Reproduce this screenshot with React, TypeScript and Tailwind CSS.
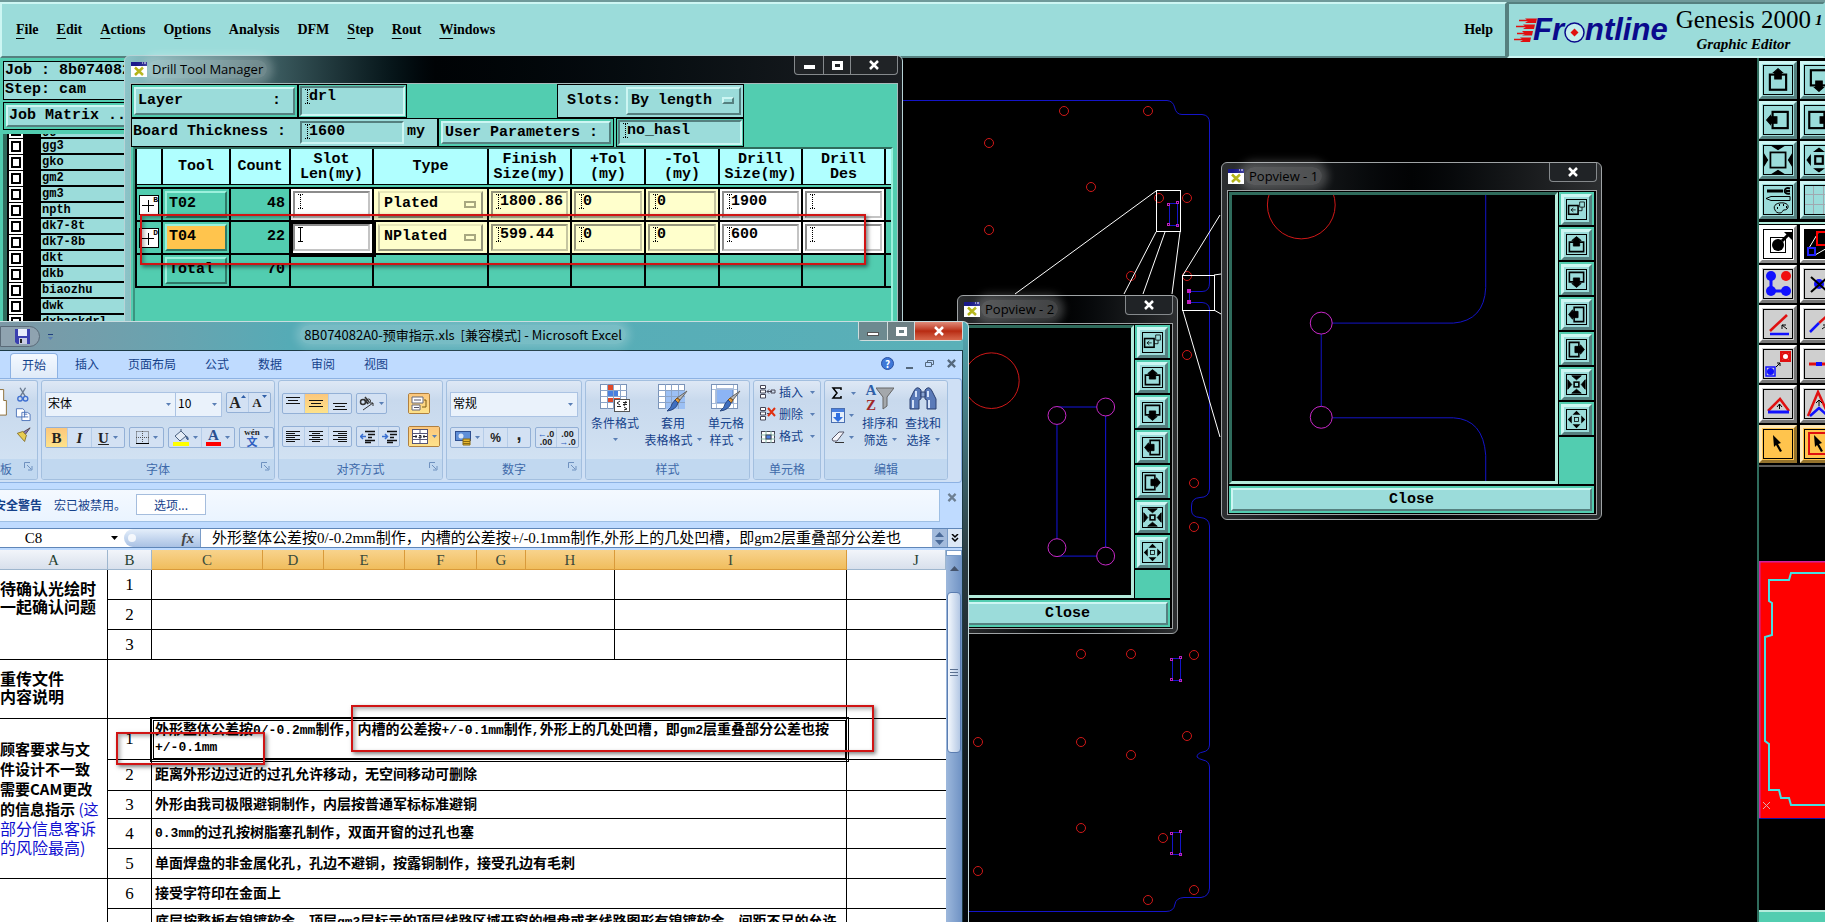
import React from "react";
import clsx from "clsx";

const RAISED =
  "border-2 border-t-[#cdf6f3] border-l-[#cdf6f3] border-b-[#55807f] border-r-[#55807f] bg-[#9bdcda]";
const SUNKEN =
  "border-2 border-t-[#55807f] border-l-[#55807f] border-b-[#cdf6f3] border-r-[#cdf6f3] bg-[#9bdcda]";
const MONO = "font-['Liberation_Mono',monospace]";
const SERIF = "font-['Liberation_Serif','Noto_Sans_CJK_SC',serif]";
const CJK = "font-['Noto_Sans_CJK_SC',sans-serif]";

/* ---------- main menu ---------- */

const MENUS: [string, string, string][] = [
  ["", "F", "ile"],
  ["", "E", "dit"],
  ["", "A", "ctions"],
  ["O", "p", "tions"],
  ["Analysis", "", ""],
  ["DFM", "", ""],
  ["", "S", "tep"],
  ["", "R", "out"],
  ["", "W", "indows"],
];

function FrontlineLogo() {
  return (
    <div className="flex items-center">
      <svg width="24" height="26" viewBox="0 0 24 26" className="-mr-1">
        <path d="M6 3.500h12M3 9.500h12M4 16.500h10M1 22.500h12" stroke="#e01010" strokeWidth="1.500" />
        <path
          d="M12 1.500H24L23 6H12L15 4ZM10 7.500H22L21 12H10L13 10ZM9 14H20L19 18.500H9L12 17ZM7 20.500H18L17 25H7L10 23Z"
          fill="#e01010"
        />
      </svg>
      <div className="flex items-center font-['Liberation_Sans',sans-serif] text-[31px] font-bold italic leading-8 text-[#0a0a8c]">
        <span>Fr</span>
        <svg width="21" height="21" viewBox="0 0 21 21" className="mt-1">
          <circle cx="10.500" cy="10.500" r="9.500" fill="#c4eeec" stroke="#0a0a8c" strokeWidth="1.500" />
          <path d="M10.500 6.500L14.500 10.500L10.500 14.500L6.500 10.500Z" fill="#e01010" />
        </svg>
        <span>ntline</span>
      </div>
    </div>
  );
}

function MenuBar() {
  return (
    <header className="relative flex h-[58px] shrink-0 border-t-2 border-[#6f9a9a] bg-[#9bdcda]">
      <nav
        className={clsx(
          "flex flex-1 items-center gap-[18px] border-2 border-t-[#cdf6f3] border-l-[#cdf6f3] border-b-[#55807f] border-r-[#55807f] pb-[1px] pl-[14px] pr-3 text-sm font-bold text-black",
          SERIF
        )}
      >
        {MENUS.map(([pre, key, post]) => (
          <button key={pre + key + post} type="button">
            {pre}
            <span className="underline underline-offset-4">{key}</span>
            {post}
          </button>
        ))}
        <button type="button" className="ml-auto">
          Help
        </button>
      </nav>
      <div className="flex w-[318px] items-center overflow-hidden border-2 border-t-[#55807f] border-l-[#55807f] border-b-[#cdf6f3] border-r-transparent pl-1 whitespace-nowrap">
        <FrontlineLogo />
        <div className={clsx("ml-2 text-center text-black", SERIF)}>
          <div className="text-[25px] leading-7">Genesis 2000</div>
          <div className="text-[15px] font-bold italic leading-5">Graphic Editor</div>
        </div>
        <span className={clsx("mb-5 ml-1 text-[15px] font-bold italic", SERIF)}>1</span>
      </div>
    </header>
  );
}

/* ---------- layer list ---------- */

const LAYERS = ["gg2", "gg3", "gko", "gm2", "gm3", "npth", "dk7-8t", "dk7-8b", "dkt", "dkb", "biaozhu", "dwk", "dxbackdrl"];

function LayerSidebar() {
  return (
    <aside className={clsx("relative flex w-[160px] shrink-0 flex-col bg-[#52cdb0] pl-[3px] text-black", MONO)}>
      <div className="mt-[3px] border border-black bg-[#9bdcda] pl-[1px] text-[15px] font-bold leading-[18px]">
        Job : 8b074082a0
      </div>
      <div className="border border-t-0 border-black bg-[#9bdcda] pl-[1px] text-[15px] font-bold leading-[18px]">
        Step: cam
      </div>
      <div className="mt-[2px] border border-black p-[2px]">
        <button type="button" className={clsx("block w-full pl-[1px] text-left text-[15px] font-bold leading-[18px]", RAISED)}>
          Job Matrix ...
        </button>
      </div>
      <ul className="mt-1 flex-1 overflow-hidden border-l-4 border-[#2f6b5c] bg-black">
        {LAYERS.map((name, i) => (
          <li key={name} className={clsx("flex h-4", i === 0 && "-mt-[11px]")}>
            <label className="flex flex-1">
              <span className="ml-[2px] flex h-[15px] w-[14px] items-center justify-center bg-white">
                <input type="checkbox" className="h-[11px] w-[10px] appearance-none border-2 border-black bg-white" />
              </span>
              <span className="ml-[18px] flex-1 border-b-2 border-black bg-[#9bdcda] pl-[1px] text-xs font-bold leading-[14px]">
                {name}
              </span>
            </label>
          </li>
        ))}
      </ul>
    </aside>
  );
}

/* ---------- board drawing ---------- */

const HOLES: [number, number][] = [
  [1064, 111], [1148, 111], [989, 143], [1091, 187], [989, 230], [1159, 198], [1187, 198],
  [1131, 276], [1187, 276], [1187, 355], [1194, 483], [1194, 527], [1081, 654], [1131, 654],
  [1194, 655], [978, 742], [1081, 742], [1187, 736], [1131, 755], [978, 871], [1081, 828],
  [1163, 838], [1148, 900], [1194, 890],
];

function SlotMark({ x, y }: { x: number; y: number }) {
  return (
    <g transform={`translate(${x} ${y})`} fill="none">
      <path d="M1.500 .500H9.500V22.500H1.500Z" stroke="#1414c8" />
      <g stroke="#c020c0">
        <rect x="-.5" y=".5" width="2" height="2" />
        <rect x="8.500" y="-1.500" width="2" height="2" />
        <rect x="-.5" y="20.500" width="2" height="2" />
        <rect x="8.500" y="21.500" width="2" height="2" />
      </g>
    </g>
  );
}

function BoardDrawing() {
  return (
    <svg className="absolute inset-0 h-full w-full bg-black" fill="none">
      <path
        d="M890 100.500H1167Q1173 101 1174.500 107Q1176 114.500 1182 114.500H1202Q1209.500 115 1209.500 123V283Q1209.500 291.500 1202 291.500H1189.500V302.500H1202Q1209.500 303 1209.500 310V489Q1209 497.500 1200 497.500Q1191.500 498 1191.500 506V510Q1191.500 517 1200 517.500Q1209 518 1209.500 526V745Q1209 751 1203 752Q1197 753 1197 757Q1199 759 1203 760Q1209 761 1209.500 767V888Q1209 896.500 1201 897.500H1184Q1176 898 1175 904Q1174 911.500 1166 911.500H960"
        stroke="#1414c8"
      />
      {HOLES.map(([cx, cy]) => (
        <circle key={`${cx}-${cy}`} cx={cx} cy={cy} r="4.500" stroke="#d01818" />
      ))}
      <SlotMark x={1168} y={203} />
      <SlotMark x={1171} y={658} />
      <SlotMark x={1171} y={832} />
      <g fill="#c020c0">
        <rect x="1187" y="289" width="4" height="4" />
        <rect x="1187" y="300" width="4" height="4" />
      </g>
      <g stroke="#fff">
        <rect x="1156.500" y="190.500" width="24" height="41" />
        <rect x="1182.500" y="275.500" width="32" height="35" />
        <path d="M1156 191L1015 294M1156 232L1124 294M1165 232L1143 294M1180 232L1172 294" />
        <path d="M1183 275L1220 215M1214 275L1221 274M1214 310L1221 314M1183 311L1220 437" />
      </g>
    </svg>
  );
}

/* ---------- window chrome ---------- */

function XAppIcon() {
  return (
    <svg width="16" height="15" viewBox="0 0 16 15" className="shrink-0">
      <rect width="16" height="15" fill="#fff" />
      <rect width="16" height="4" fill="#1a1a8a" />
      <path d="M11 1h1M13 1h2" stroke="#fff" />
      <path d="M4 5.500L12 13M12 5.500L4 13" stroke="#b3b312" strokeWidth="2.500" />
    </svg>
  );
}

function CloseGlyph({ className = "text-white" }: { className?: string }) {
  return (
    <svg width="12" height="10" viewBox="0 0 12 10" className={className}>
      <path d="M2 1L10 9M10 1L2 9" stroke="currentColor" strokeWidth="2.500" />
    </svg>
  );
}

function WindowTitle({ title, withSizers }: { title: string; withSizers?: boolean }) {
  return (
    <div className="flex h-[27px] shrink-0 items-start">
      <div className="flex items-center gap-px pl-[1px] pt-1">
        <XAppIcon />
        <span className="rounded-full bg-white/25 px-1 font-['Open_Sans','Noto_Sans',sans-serif] text-[13px] leading-[18px] text-black shadow-[0_0_8px_6px_rgba(255,255,255,0.22)]">
          {title}
        </span>
      </div>
      <div className="ml-auto flex h-[19px] rounded-b border border-t-0 border-[#85898c] bg-[#202326]">
        {withSizers && (
          <>
            <button type="button" aria-label="Minimize" className="flex w-[29px] items-center justify-center border-r border-[#85898c]">
              <span className="mt-1 h-1 w-[11px] bg-white" />
            </button>
            <button type="button" aria-label="Maximize" className="flex w-[27px] items-center justify-center border-r border-[#85898c]">
              <span className="h-[9px] w-[11px] border-[3px] border-white" />
            </button>
          </>
        )}
        <button type="button" aria-label="Close window" className="flex w-[46px] items-center justify-center">
          <CloseGlyph />
        </button>
      </div>
    </div>
  );
}

/* ---------- drill tool manager ---------- */

function IBeam({ solid }: { solid?: boolean }) {
  return (
    <svg width="5" height="15" viewBox="0 0 5 15" className="shrink-0">
      <path
        d="M0 .500H5M2.500 1V14M0 14.500H5"
        stroke="#000"
        strokeDasharray={solid ? undefined : "1 1"}
      />
    </svg>
  );
}

function EntryBox({ label, value, className }: { label: string; value: string; className?: string }) {
  return (
    <div className={clsx("flex items-start pl-[3px] pt-[1px]", SUNKEN, className)}>
      <IBeam />
      <input aria-label={label} defaultValue={value} className="-ml-px w-full min-w-0 bg-transparent text-[15px] font-bold leading-4 outline-none" />
    </div>
  );
}

type Tool = {
  flag: string;
  name: string;
  count: number;
  active?: boolean;
  type: string;
  finish: string;
  drill: string;
};

const TOOLS: Tool[] = [
  { flag: "B", name: "T02", count: 48, type: "Plated", finish: "1800.86", drill: "1900" },
  { flag: "D", name: "T04", count: 22, active: true, type: "NPlated", finish: "599.44", drill: "600" },
];

const HEADS = ["", "Tool", "Count", "Slot\nLen(my)", "Type", "Finish\nSize(my)", "+Tol\n(my)", "-Tol\n(my)", "Drill\nSize(my)", "Drill\nDes", ""];

function CellInput({ label, value, yellow, focused }: { label: string; value?: string; yellow?: boolean; focused?: boolean }) {
  return (
    <td
      className={clsx(
        "border-b-2 border-r-2 border-black p-0",
        yellow ? "bg-[#ffffcc]" : "bg-white",
        focused && "relative z-10 outline-4 -outline-offset-2 outline-black"
      )}
    >
      <div
        className={clsx(
          "m-[2px] flex h-[27px] items-start border-2 pl-[3px] pt-[1px]",
          yellow
            ? "border-t-[#96967c] border-l-[#96967c] border-b-[#c5c5a0] border-r-[#c5c5a0]"
            : "border-t-[#8c8c8c] border-l-[#8c8c8c] border-b-[#c4c4c4] border-r-[#c4c4c4]"
        )}
      >
        <IBeam solid={focused} />
        <input aria-label={label} defaultValue={value} className="-ml-px w-full min-w-0 bg-transparent font-bold leading-4 outline-none" />
      </div>
    </td>
  );
}

function ToolRow({ tool }: { tool: Tool }) {
  return (
    <tr className="h-[33px]">
      <td className="border-b-2 border-r-2 border-black p-0">
        <div className="relative ml-[2px] h-5 w-5 border border-black bg-white">
          <svg width="18" height="18" viewBox="0 0 18 18">
            <path d="M2 9.500H14M8.500 4V16" stroke="#000" />
          </svg>
          <span className="absolute -top-[1px] right-0 text-[8px] font-bold leading-[9px]">{tool.flag}</span>
        </div>
      </td>
      <td className="border-b-2 border-r-2 border-black p-0">
        <button
          type="button"
          className={clsx(
            "mx-[2px] block h-[27px] w-[62px] border-2 border-t-[#9bf0dc] border-l-[#9bf0dc] border-b-[#2f7a68] border-r-[#2f7a68] pl-[2px] text-left",
            tool.active && "bg-[#ffc44d]"
          )}
        >
          {tool.name}
        </button>
      </td>
      <td className="border-b-2 border-r-2 border-black p-0 pr-1 text-right">{tool.count}</td>
      <CellInput label="Slot length" focused={tool.active} />
      <td className="border-b-2 border-r-2 border-black bg-[#ffffcc] p-0">
        <div className="relative mx-1 h-[27px] border-2 border-t-[#e8e8b8] border-l-[#c5c5a0] border-b-[#96967c] border-r-[#96967c]">
          <select aria-label="Type" className="h-full w-full appearance-none pl-1 font-bold">
            <option>{tool.type}</option>
          </select>
          <span className="pointer-events-none absolute right-[5px] top-2 h-[7px] w-3 border-2 border-[#a8a880]" />
        </div>
      </td>
      <CellInput label="Finish size" value={tool.finish} yellow />
      <CellInput label="Plus tolerance" value="0" yellow />
      <CellInput label="Minus tolerance" value="0" yellow />
      <CellInput label="Drill size" value={tool.drill} />
      <CellInput label="Drill designator" />
      <td className="border-b-2 border-black" />
    </tr>
  );
}

function DrillToolManager() {
  return (
    <section className="absolute left-[124px] top-[55px] flex h-[300px] w-[779px] flex-col rounded-t-md border border-[#b7d3d6] bg-linear-to-r from-[#8cc4c8] via-[#000305] via-40% to-[#1b1e22] pl-[5px] pr-1">
      <WindowTitle title="Drill Tool Manager" withSizers />
      <div className={clsx("flex-1 border border-[#a8bcbc] bg-[#52cdb0] text-[15px] font-bold text-black", MONO)}>
        <div className="flex h-[34px]">
          <div className="w-[167px] border border-black p-[2px]">
            <button type="button" className={clsx("flex h-full w-full items-center justify-between pl-[2px] pr-3", RAISED)}>
              <span>Layer</span>
              <span>:</span>
            </button>
          </div>
          <div className="w-[109px] border border-black p-[1px]">
            <EntryBox label="Layer" value="drl" className="h-full" />
          </div>
          <label className="ml-[150px] flex w-[187px] items-center justify-between border border-black bg-[#9bdcda] pl-[9px] pr-[2px]">
            Slots:
            <span className={clsx("relative h-[28px] w-[115px]", RAISED)}>
              <select className="h-full w-full appearance-none pl-[3px] font-bold">
                <option>By length</option>
              </select>
              <span className="pointer-events-none absolute right-[5px] top-2 h-[7px] w-3 border-2 border-t-[#cdf6f3] border-l-[#cdf6f3] border-b-[#55807f] border-r-[#55807f]" />
            </span>
          </label>
        </div>
        <div className="flex h-[29px]">
          <label className="flex w-[307px] items-center border border-black bg-[#9bdcda] pl-[1px]">
            <span className="w-[167px]">Board Thickness :</span>
            <EntryBox label="Board thickness" value="1600" className="h-[23px] w-[104px]" />
            <span className="ml-[3px]">my</span>
          </label>
          <div className="w-[176px] border border-black p-[2px]">
            <button type="button" className={clsx("block h-full w-full pl-[2px] text-left leading-5", RAISED)}>
              User Parameters :
            </button>
          </div>
          <div className="ml-[2px] w-[128px] border border-black p-[1px]">
            <EntryBox label="User parameters" value="no_hasl" className="h-full" />
          </div>
        </div>
        <div className="ml-[2px] mr-1 h-[174px] overflow-hidden border-2 border-b-0 border-l-[#3b9480] border-r-[#9bf0dc] border-t-[#2f6b5c]">
          <table className="w-[758px] table-fixed border-separate border-spacing-0 border-l-2 border-black">
            <colgroup>
              <col className="w-[26px]" />
              <col className="w-[68px]" />
              <col className="w-[60px]" />
              <col className="w-[83px]" />
              <col className="w-[115px]" />
              <col className="w-[83px]" />
              <col className="w-[74px]" />
              <col className="w-[74px]" />
              <col className="w-[83px]" />
              <col className="w-[83px]" />
              <col className="w-[9px]" />
            </colgroup>
            <thead>
              <tr className="h-9">
                {HEADS.map((head, i) => (
                  <th key={i} className="border-b border-r-2 border-black bg-[#b0ffff] p-0 leading-[15px] whitespace-pre">
                    {head}
                  </th>
                ))}
              </tr>
              <tr className="h-1">
                <td colSpan={11} className="border-b-2 border-black p-0" />
              </tr>
            </thead>
            <tbody>
              {TOOLS.map((tool) => (
                <ToolRow key={tool.name} tool={tool} />
              ))}
              <tr className="h-[33px]">
                <td className="border-b-2 border-r-2 border-black" />
                <td className="border-b-2 border-r-2 border-black p-0">
                  <button
                    type="button"
                    className="mx-[2px] block h-[27px] w-[62px] border-2 border-t-[#9bf0dc] border-l-[#9bf0dc] border-b-[#2f7a68] border-r-[#2f7a68] pl-[2px] text-left"
                  >
                    Total
                  </button>
                </td>
                <td className="border-b-2 border-r-2 border-black p-0 pr-1 text-right">70</td>
                {[0, 1, 2, 3, 4, 5, 6].map((n) => (
                  <td key={n} className="border-b-2 border-r-2 border-black" />
                ))}
                <td className="border-b-2 border-black" />
              </tr>
            </tbody>
          </table>
        </div>
      </div>
    </section>
  );
}

/* ---------- popview windows ---------- */

type ViewIcon = "swap" | "up" | "down" | "left" | "right" | "in" | "out" | "big" | "small";

const INWARD = "M6 1H18L12 6ZM6 23H18L12 18ZM1 6V18L6 12ZM23 6V18L18 12Z";
const OUTWARD = "M7 6H17L12 1ZM7 18H17L12 23ZM6 7V17L1 12ZM18 7V17L23 12Z";
const TURNS: Record<string, number> = { up: 0, right: 90, down: 180, left: 270 };

function ViewGlyph({ icon, size, slim }: { icon: ViewIcon; size: number; slim?: boolean }) {
  return (
    <svg width={size} height={size} viewBox="0 0 24 24" fill="none" stroke="#000">
      {icon in TURNS && (
        <g transform={`rotate(${TURNS[icon]} 12 12)`}>
          {slim ? (
            <>
              <rect x="4.500" y="7" width="15" height="14" strokeWidth="2" />
              <path d="M12 1.500L16 5H15V11H9V5H8Z" fill="#000" />
            </>
          ) : (
            <>
              <path d="M9 9H3V21H21V9H15" strokeWidth="2" />
              <path d="M12 2L18 7H16V14H8V7H6Z" fill="#000" />
            </>
          )}
        </g>
      )}
      {icon === "swap" && (
        <>
          <rect x="2" y="7" width="12" height="11" strokeWidth="2" />
          <path d="M11 12.500H5M8 10L5 12.500L8 15M14 13.500H19V9" />
          <path d="M16 2.500H22V9H16Z" />
        </>
      )}
      {icon === "in" && (
        <>
          <rect x="9" y="9" width="6" height="6" strokeWidth="2" />
          <path d={INWARD} fill="#000" />
        </>
      )}
      {icon === "out" && (
        <>
          <rect x="9.500" y="9.500" width="5" height="5" />
          <path d={OUTWARD} fill="#000" strokeWidth="0" />
        </>
      )}
      {icon === "big" && (
        <>
          <rect x="5.500" y="5.500" width="13" height="13" strokeWidth="1.500" />
          <path d="M8 .500H16L12 3ZM8 23.500H16L12 21ZM.500 8V16L3 12ZM23.500 8V16L21 12Z" fill="#000" />
        </>
      )}
      {icon === "small" && (
        <>
          <rect x="8.500" y="8.500" width="7" height="7" strokeWidth="2" />
          <path d="M8 4H16L12 1ZM8 20H16L12 23ZM4 8V16L1 12ZM20 8V16L23 12Z" fill="#000" />
        </>
      )}
    </svg>
  );
}

const VIEW_ICONS: ViewIcon[] = ["swap", "up", "down", "left", "right", "in", "out"];

function Popview({ title, className, children }: { title: string; className: string; children: React.ReactNode }) {
  return (
    <section
      className={clsx(
        "absolute flex flex-col rounded-md border border-[#9fa3a5] bg-linear-to-r from-[#2c2e30] via-[#020304] to-[#2c2e30] pb-[5px] pl-[5px] pr-1",
        className
      )}
    >
      <WindowTitle title={title} />
      <div className="flex flex-1 flex-col border border-[#9fa3a5] bg-black p-[1px]">
        <div className="flex flex-1">
          <div className="flex-1 overflow-hidden border-[3px] border-b-[#b4ecdc] border-l-[#2f6b5c] border-r-[#b4ecdc] border-t-[#2f6b5c]">
            {children}
          </div>
          <div className="ml-[1px] mr-[1px] flex w-[35px] flex-col bg-[#52cdb0]">
            {VIEW_ICONS.map((icon) => (
              <div key={icon} className="h-[35px] border-b-2 border-black p-[2px]">
                <button
                  type="button"
                  aria-label={`View ${icon}`}
                  className="flex h-[31px] w-[31px] items-center justify-center border-[3px] border-t-[#cdf6f3] border-l-[#cdf6f3] border-b-[#55807f] border-r-[#55807f] bg-[#9bdcda]"
                >
                  <span className="border border-black">
                    <ViewGlyph icon={icon} size={19} />
                  </span>
                </button>
              </div>
            ))}
          </div>
        </div>
        <div className="mr-[1px] mt-[2px] bg-[#52cdb0] p-[2px]">
          <button type="button" className={clsx("block h-[23px] w-full text-[15px] font-bold leading-[19px]", RAISED, MONO)}>
            Close
          </button>
        </div>
      </div>
    </section>
  );
}

function PopviewTwo() {
  return (
    <Popview title="Popview - 2" className="left-[957px] top-[295px] h-[339px] w-[221px]">
      <svg viewBox="967 326 164 269" preserveAspectRatio="xMaxYMin meet" width="100%" fill="none">
        <circle cx="990.500" cy="379" r="28" stroke="#d01818" />
        <path d="M1056.500 405.500H1105.500V555.500H1056.500Z" stroke="#1414e0" />
        <g stroke="#c828c8" fill="#000">
          <circle cx="1056.500" cy="414" r="9" />
          <circle cx="1105.500" cy="405.500" r="9" />
          <circle cx="1056.500" cy="547" r="9" />
          <circle cx="1105.500" cy="555.500" r="9" />
        </g>
      </svg>
    </Popview>
  );
}

function PopviewOne() {
  return (
    <Popview title="Popview - 1" className="left-[1221px] top-[162px] h-[358px] w-[381px]">
      <svg viewBox="1231 194 324 287" width="100%" fill="none">
        <circle cx="1300.500" cy="204" r="34" stroke="#d01818" />
        <path d="M1485.500 190V287Q1484 320 1453 322.500H1320.500V417.500H1453Q1483 419 1485.500 455V490" stroke="#1414c8" />
        <circle cx="1320.500" cy="322.500" r="11" stroke="#c828c8" fill="#000" />
        <circle cx="1320.500" cy="417" r="11" stroke="#c828c8" fill="#000" />
      </svg>
    </Popview>
  );
}

/* ---------- right tool strip ---------- */

function StripButton({ tone, label, children }: { tone: "aqua" | "white" | "gray" | "gold"; label: string; children: React.ReactNode }) {
  return (
    <button
      type="button"
      aria-label={label}
      className={clsx(
        "flex h-[38px] w-[38px] items-center justify-center border-[3px]",
        tone === "aqua" && "border-t-[#cdf6f3] border-l-[#cdf6f3] border-b-[#55807f] border-r-[#55807f] bg-[#9bdcda]",
        tone === "white" && "border-t-white border-l-white border-b-[#8a8a8a] border-r-[#8a8a8a] bg-white",
        tone === "gray" && "border-t-white border-l-white border-b-[#777] border-r-[#777] bg-[#cfcfcf]",
        tone === "gold" && "border-t-[#ffe9b8] border-l-[#ffe9b8] border-b-[#94722c] border-r-[#94722c] bg-[#ffc44d]"
      )}
    >
      <span className="flex h-[30px] w-[30px] items-center justify-center border border-black">{children}</span>
    </button>
  );
}

function Glyph({ children }: { children: React.ReactNode }) {
  return (
    <svg width="28" height="28" viewBox="0 0 28 28" fill="none">
      {children}
    </svg>
  );
}

const CURSOR = "M9 5L17 13L14 14L18 21L16 22L12 15L10 17Z";

function RightStrip() {
  return (
    <aside className="flex w-[68px] shrink-0 flex-col overflow-hidden border-l-2 border-[#2f6b5c] bg-black">
      <div className="grid w-[80px] grid-cols-2 gap-[2px] border-b-2 border-[#b4ecdc] pb-[3px] pt-[3px]">
        <StripButton tone="aqua" label="Pan up"><ViewGlyph icon="up" size={26} slim /></StripButton>
        <StripButton tone="aqua" label="Pan down"><ViewGlyph icon="down" size={26} slim /></StripButton>
        <StripButton tone="aqua" label="Pan left"><ViewGlyph icon="left" size={26} slim /></StripButton>
        <StripButton tone="aqua" label="Pan right"><ViewGlyph icon="right" size={26} slim /></StripButton>
        <StripButton tone="aqua" label="Zoom in"><ViewGlyph icon="big" size={28} /></StripButton>
        <StripButton tone="aqua" label="Zoom out"><ViewGlyph icon="small" size={26} /></StripButton>
        <StripButton tone="aqua" label="Setup">
          <Glyph>
            <path d="M3 5H19" stroke="#000" strokeWidth="3" />
            <path d="M26 2.500C20 0 18 9 26 7.500M26 5H22" stroke="#000" strokeWidth="2" />
            <path d="M2 12.500L7 10.500H26V14.500H7Z" stroke="#000" />
            <path d="M11 24C8 19 14 16 20 17C26 18 25 24 20 24C18 24 19 27 16 27C13 27 12 26 11 24Z" stroke="#000" />
            <path d="M13 22h1M15 19h1M19 19h1M22 21h1" stroke="#000" strokeWidth="2" />
          </Glyph>
        </StripButton>
        <StripButton tone="aqua" label="Grid">
          <Glyph><path d="M0 8.500H28M0 18.500H28M8.500 0V28M18.500 0V28" stroke="#a0a8b0" /></Glyph>
        </StripButton>
      </div>
      <div className="grid w-[80px] grid-cols-2 gap-[2px] border-b-2 border-[#5a5a5a] pb-[2px] pt-[1px]">
        <StripButton tone="white" label="Feature">
          <Glyph>
            <rect x="6.500" y="7.500" width="15" height="15" stroke="#000" />
            <circle cx="14" cy="15" r="6" fill="#000" />
            <path d="M18 11L24 5" stroke="#000" strokeWidth="3" />
            <path d="M20 2H28V10Z" fill="#000" />
          </Glyph>
        </StripButton>
        <StripButton tone="white" label="Copy feature">
          <Glyph>
            <rect width="28" height="28" fill="#000" />
            <path d="M4 18L13 3M10 25L24 17" stroke="#fff" />
            <rect x="12" y="2" width="13" height="13" stroke="#f00" strokeWidth="2" />
            <rect x="3" y="18" width="7" height="7" stroke="#22f" strokeWidth="2" />
          </Glyph>
        </StripButton>
        <StripButton tone="gray" label="Net points">
          <Glyph>
            <path d="M7 6V21H22" stroke="#11f" strokeWidth="3" />
            <circle cx="7" cy="6" r="5" fill="#11f" />
            <circle cx="7" cy="21" r="5" fill="#11f" />
            <circle cx="22" cy="21" r="5" fill="#11f" />
            <circle cx="22" cy="6" r="5" fill="#f01010" />
          </Glyph>
        </StripButton>
        <StripButton tone="gray" label="Delete">
          <Glyph>
            <circle cx="14" cy="14" r="5" fill="#11f" />
            <path d="M6 7L23 22M23 7L6 22" stroke="#000" strokeWidth="2" />
          </Glyph>
        </StripButton>
        <StripButton tone="gray" label="Angle">
          <Glyph>
            <path d="M6 21L23 5" stroke="#e01010" strokeWidth="2.500" />
            <path d="M6 24H25" stroke="#11f" strokeWidth="2.500" />
            <path d="M23 19L18 15M18 19V15H22" stroke="#000" />
          </Glyph>
        </StripButton>
        <StripButton tone="gray" label="Extend">
          <Glyph>
            <path d="M14 13L24 4" stroke="#e01010" strokeWidth="2.500" />
            <path d="M5 22L14 13" stroke="#11f" strokeWidth="2.500" />
            <path d="M17 19L21 16M18 15H22V19" stroke="#000" />
          </Glyph>
        </StripButton>
        <StripButton tone="gray" label="Move pad">
          <Glyph>
            <rect x="17" y="2" width="9" height="9" stroke="#e01010" strokeWidth="2" fill="#fff" />
            <circle cx="21.500" cy="6.500" r="3.500" stroke="#e01010" strokeWidth="2" />
            <rect x="2" y="17" width="9" height="9" stroke="#11f" strokeWidth="1.500" />
            <circle cx="6.500" cy="21.500" r="3.500" fill="#11f" />
            <path d="M12 17L16 13M13 13H16V16" stroke="#000" />
          </Glyph>
        </StripButton>
        <StripButton tone="gray" label="Break">
          <Glyph>
            <path d="M4 14H26" stroke="#e01010" strokeWidth="3" />
            <path d="M11 14H17" stroke="#11f" strokeWidth="4" />
          </Glyph>
        </StripButton>
        <StripButton tone="gray" label="Triangle">
          <Glyph>
            <path d="M4 21L16 9L25 21" stroke="#e01010" strokeWidth="2.500" />
            <path d="M4 22H25" stroke="#11f" strokeWidth="3" />
            <path d="M15.500 19V14M13 17L15.500 14L18 17" stroke="#000" />
          </Glyph>
        </StripButton>
        <StripButton tone="gray" label="Offset">
          <Glyph>
            <path d="M3 26L13 2L24 26" stroke="#e01010" strokeWidth="2.500" />
            <path d="M5 26L14 18L23 26" stroke="#11f" strokeWidth="2.500" />
            <path d="M14 16V10M11 13L14 10L17 13" stroke="#000" />
          </Glyph>
        </StripButton>
        <StripButton tone="gold" label="Select">
          <Glyph><path d={CURSOR} fill="#000" /></Glyph>
        </StripButton>
        <StripButton tone="gold" label="Select area">
          <Glyph>
            <rect x="4" y="3" width="21" height="21" stroke="#e01010" strokeWidth="2" />
            <path d={CURSOR} fill="#000" />
          </Glyph>
        </StripButton>
      </div>
      <svg width="80" height="258" viewBox="0 0 80 258" className="mt-[94px] shrink-0" fill="none">
        <rect width="80" height="258" fill="#f00" />
        <path d="M.500 257V.500H80" stroke="#d020a0" strokeWidth="2" />
        <path d="M0 257.500H80" stroke="#1414a0" />
        <path
          d="M80 12H32L30 19H10V40L13 42V74L6 76V180L10 183V229H20L22 237H30L32 244H80"
          stroke="#46e0e0"
          strokeWidth="2"
        />
        <path d="M4 241L11 248M11 241L4 248" stroke="#d8b0b0" />
      </svg>
      <div className="mt-auto h-3 w-full shrink-0 border-t-2 border-[#b4ecdc] bg-[#52cdb0]" />
    </aside>
  );
}

/* ---------- excel ---------- */

function Caret() {
  return (
    <svg width="5" height="3" viewBox="0 0 5 3" className="shrink-0">
      <path d="M0 0H5L2.500 3Z" fill="#5a7fb5" />
    </svg>
  );
}

function RibbonGroup({ label, launcher, className, children }: { label: string; launcher?: boolean; className: string; children?: React.ReactNode }) {
  return (
    <div
      className={clsx(
        "relative flex h-[100px] shrink-0 flex-col overflow-hidden rounded-[3px] border border-[#a3bfdf] bg-linear-to-b from-[#dee8f5] via-[#c8d9ed] via-20% to-[#d4e4f4]",
        className
      )}
    >
      <div className="flex-1">{children}</div>
      <div className="flex h-5 items-center justify-center bg-[#c1d8f0] text-xs leading-5 text-[#3e6aaa]">
        {label}
        {launcher && (
          <svg width="9" height="9" viewBox="0 0 9 9" fill="none" stroke="#6f91bf" className="absolute bottom-2 right-1">
            <path d="M.500 6V.500H6M3 3L7 7M8 4V8H4" />
          </svg>
        )}
      </div>
    </div>
  );
}

function RibbonSet({ children, className }: { children: React.ReactNode; className?: string }) {
  return (
    <div className={clsx("flex h-[21px] items-stretch divide-x divide-[#b5cce8] rounded-[2px] border border-[#93b0d6] bg-[#d3e1f3]", className)}>
      {children}
    </div>
  );
}

function RB({ label, on, caret, className, children }: { label: string; on?: boolean; caret?: boolean; className: string; children: React.ReactNode }) {
  return (
    <button
      type="button"
      aria-label={label}
      className={clsx("flex items-center justify-center gap-1 text-[#222]", on && "bg-linear-to-b from-[#fcc77c] to-[#fde28a]", className)}
    >
      {children}
      {caret && <Caret />}
    </button>
  );
}

function Combo({ label, value, className }: { label: string; value: string; className: string }) {
  return (
    <span className={clsx("relative h-[25px] border border-[#abc3e3] bg-[#eaf2fb]", className)}>
      <select aria-label={label} className="block h-5 w-full appearance-none pl-[2px] text-xs text-black">
        <option>{value}</option>
      </select>
      <span className="pointer-events-none absolute right-1 top-[10px]">
        <Caret />
      </span>
    </span>
  );
}

function Lines({ rows }: { rows: [number, number, number][] }) {
  return (
    <svg width="15" height="15" viewBox="0 0 15 15">
      {rows.map(([x, y, w]) => (
        <path key={y} d={`M${x} ${y + 0.5}h${w}`} stroke="#111" />
      ))}
    </svg>
  );
}

const LEFT: [number, number, number][] = [[0, 2, 14], [0, 4, 9], [0, 6, 14], [0, 8, 9], [0, 10, 14], [0, 12, 9]];
const CENTER: [number, number, number][] = [[0, 2, 14], [3, 4, 8], [0, 6, 14], [3, 8, 8], [0, 10, 14], [3, 12, 8]];
const RIGHT: [number, number, number][] = [[0, 2, 14], [5, 4, 9], [0, 6, 14], [5, 8, 9], [0, 10, 14], [5, 12, 9]];

function IndentIcon({ flip }: { flip?: boolean }) {
  return (
    <svg width="15" height="14" viewBox="0 0 15 14" fill="none">
      <path d="M5 1.500H15M8 4.500H15M8 7.500H12M5 10.500H15M5 12.500H11" stroke="#111" strokeWidth="1.500" />
      <path d={flip ? "M0 6.500H5M3 4L5.500 6.500L3 9" : "M6 6.500H1M3 4L.500 6.500L3 9"} stroke="#3a6fd0" strokeWidth="1.500" />
    </svg>
  );
}

function SizeMark({ down }: { down?: boolean }) {
  return (
    <svg width="5" height="3" viewBox="0 0 5 3" className="-ml-1 mb-3">
      <path d={down ? "M0 0H5L2.500 3Z" : "M0 3H5L2.500 0Z"} fill="#2f5fa8" />
    </svg>
  );
}

function FontGroup() {
  return (
    <RibbonGroup label="字体" launcher className="w-[234px]">
      <div className="flex pl-[3px] pt-[11px]">
        <Combo label="字体名称" value="宋体" className="w-[131px]" />
        <Combo label="字号" value="10" className="-ml-[1px] w-[47px]" />
        <RibbonSet className={clsx("ml-1 font-bold", SERIF)}>
          <RB label="增大字号" className="w-[22px]"><span className="text-base">A</span><SizeMark /></RB>
          <RB label="减小字号" className="w-[21px]"><span className="text-[13px]">A</span><SizeMark down /></RB>
        </RibbonSet>
      </div>
      <div className={clsx("flex gap-1 pl-[3px] pt-[10px] text-[15px] font-bold leading-5", SERIF)}>
        <RibbonSet>
          <RB label="加粗" on className="w-[22px]">B</RB>
          <RB label="倾斜" className="w-[24px]"><i>I</i></RB>
          <RB label="下划线" caret className="w-[32px]"><u>U</u></RB>
        </RibbonSet>
        <RibbonSet>
          <RB label="边框" caret className="w-[33px]">
            <svg width="13" height="13" viewBox="0 0 13 13" stroke="#555" strokeDasharray="1 1" fill="none">
              <path d="M.500 .500H12.500V12M.500 .500V12M6.500 0V12M0 6.500H13" />
              <path d="M0 12.500H13" stroke="#000" strokeDasharray="none" />
            </svg>
          </RB>
        </RibbonSet>
        <RibbonSet>
          <RB label="填充颜色" caret className="w-[33px]">
            <svg width="16" height="17" viewBox="0 0 16 17">
              <path d="M2 7L8 2L13 7L7 12Z" fill="#e4ecf6" stroke="#4a6080" />
              <path d="M8 2V0M13 7Q16 8 15 11Q13 10 13 7" fill="#3a6fd0" stroke="#4a6080" />
              <rect y="13" width="16" height="4" fill="#ff0" />
            </svg>
          </RB>
          <RB label="字体颜色" caret className="w-[32px]">
            <span className="border-b-4 border-[#f00] px-[2px] leading-[13px] text-[#2a4f8f]">A</span>
          </RB>
        </RibbonSet>
        <RibbonSet>
          <RB label="拼音" caret className="w-[33px]">
            <span className="text-center text-[9px] leading-[8px]">
              wén
              <span className={clsx("block text-[11px] leading-[11px] text-[#2f5fc0]", CJK)}>文</span>
            </span>
          </RB>
        </RibbonSet>
      </div>
    </RibbonGroup>
  );
}

function AlignGroup() {
  return (
    <RibbonGroup label="对齐方式" launcher className="w-[165px]">
      <div className="flex pl-[3px] pt-[12px]">
        <RibbonSet>
          <RB label="顶端对齐" className="w-[22px]"><Lines rows={[[0, 1, 14], [2, 4, 10], [0, 7, 14]]} /></RB>
          <RB label="垂直居中" on className="w-[24px]"><Lines rows={[[0, 4, 14], [2, 7, 10], [0, 10, 14]]} /></RB>
          <RB label="底端对齐" className="w-[22px]"><Lines rows={[[0, 7, 14], [2, 10, 10], [0, 13, 14]]} /></RB>
        </RibbonSet>
        <RibbonSet className="ml-1">
          <RB label="方向" caret className="w-[29px]">
            <svg width="16" height="16" viewBox="0 0 16 16" fill="none" stroke="#333">
              <circle cx="4" cy="6" r="2.500" strokeWidth="1.500" />
              <path d="M5 3L9 8M6 1L10 6" strokeWidth="1.500" />
              <circle cx="9.500" cy="5" r="2" />
              <path d="M4 14L14 7M11 7H14V10" />
            </svg>
          </RB>
        </RibbonSet>
        <RibbonSet className="ml-[21px] border-[#b08040]">
          <RB label="自动换行" on className="w-5">
            <svg width="16" height="15" viewBox="0 0 16 15" fill="none">
              <path d="M1 1H12V7H1ZM1 9H9V14H1Z" fill="#fff" stroke="#667" />
              <path d="M3 4H10M3 11.500H8" stroke="#556" />
              <path d="M13 4H15V11H11" stroke="#7a5a10" />
            </svg>
          </RB>
        </RibbonSet>
      </div>
      <div className="flex pl-[3px] pt-[12px]">
        <RibbonSet>
          <RB label="左对齐" className="w-[22px]"><Lines rows={LEFT} /></RB>
          <RB label="居中" className="w-[24px]"><Lines rows={CENTER} /></RB>
          <RB label="右对齐" className="w-[22px]"><Lines rows={RIGHT} /></RB>
        </RibbonSet>
        <RibbonSet className="ml-1">
          <RB label="减少缩进" className="w-[22px]"><IndentIcon /></RB>
          <RB label="增加缩进" className="w-[20px]"><IndentIcon flip /></RB>
        </RibbonSet>
        <RibbonSet className="ml-2 border-[#b08040]">
          <RB label="合并后居中" on caret className="w-[30px]">
            <svg width="16" height="15" viewBox="0 0 16 15" fill="none">
              <rect x=".5" y=".5" width="15" height="14" fill="#fff" stroke="#557" />
              <path d="M0 4.500H16M0 10.500H16M8 0V4M8 11V15" stroke="#557" />
              <path d="M1 7.500H5M15 7.500H11M4 6V9M12 6V9M7 6.500H9V9H7V8H9" stroke="#223" />
            </svg>
          </RB>
        </RibbonSet>
      </div>
    </RibbonGroup>
  );
}

function NumberGroup() {
  return (
    <RibbonGroup label="数字" launcher className="w-[136px]">
      <div className="flex pl-[3px] pt-[11px]">
        <Combo label="数字格式" value="常规" className="w-[128px]" />
      </div>
      <div className="flex gap-1 pl-[3px] pt-[10px] font-['Liberation_Sans',sans-serif] text-xs">
        <RibbonSet>
          <RB label="会计数字格式" caret className="w-[33px]">
            <svg width="16" height="16" viewBox="0 0 16 16">
              <rect x=".5" y="1.500" width="15" height="9" fill="#5f8fd8" stroke="#2f4f90" />
              <circle cx="6" cy="6" r="2.500" fill="#d8e6fa" />
              <path d="M8 9H15V15H8Z" fill="#e8b830" stroke="#8a6a10" />
              <path d="M8 11.500H15M8 13.500H15" stroke="#8a6a10" />
            </svg>
          </RB>
          <RB label="百分比" className="w-[24px]"><span className="font-bold">%</span></RB>
          <RB label="千位分隔" className="w-[22px]"><span className="mb-2 text-[18px] font-bold leading-3">,</span></RB>
        </RibbonSet>
        <RibbonSet>
          <RB label="增加小数位" className="w-[21px]"><span className="text-[9px] font-bold leading-2"><span className="text-[#2f5fc0]">←</span>.0<br />.00</span></RB>
          <RB label="减少小数位" className="w-[21px]"><span className="text-[9px] font-bold leading-2">.00<br /><span className="text-[#2f5fc0]">→</span>.0</span></RB>
        </RibbonSet>
      </div>
    </RibbonGroup>
  );
}

function TableIcon({ kind }: { kind: "cond" | "table" | "cell" }) {
  return (
    <svg width="30" height="29" viewBox="0 0 30 29" fill="none">
      <rect x=".5" y=".5" width="26" height="24" fill="#fff" stroke="#7a93b8" />
      {kind === "cond" && <path d="M7 1H13V7H7ZM7 14H20V19H7Z" fill="#e04a2a" />}
      {kind === "cond" && <path d="M7 7H18V13H7Z" fill="#4a80e0" />}
      {kind === "table" && <path d="M7 7H27V25H7Z" fill="#9cc0f4" />}
      {kind === "cell" && <path d="M5 5H22V19H5Z" fill="#8cb4f4" stroke="#5a80c0" />}
      {kind !== "cell" && <path d="M.500 6.500H27M.500 12.500H27M.500 18.500H27M7.500 0V25M13.500 0V25M20.500 0V25" stroke="#8ba4c8" />}
      {kind === "cell" && <path d="M1 5.500H26M1 19.500H26M5.500 1V24M22.500 1V24" stroke="#a8bcd8" />}
      {kind === "cond" ? (
        <>
          <rect x="14.500" y="15.500" width="15" height="12" fill="#fff" stroke="#555" />
          <path d="M20 17L17 19L20 21M17 22.500H21M23 18.500H27M23 20.500H27M26 17L24 22M24 23L27 25L24 26" stroke="#222" />
        </>
      ) : (
        <>
          <path d="M29 7L22 16L19 14Z" fill="#b8b8b8" stroke="#666" />
          <path d="M22 16L19 14L17 16L20 19Z" fill="#e09a40" stroke="#805010" />
          <path d="M17 16L20 19Q18 26 9 27Q14 23 14 20Z" fill="#3f6fc0" stroke="#2a4880" />
        </>
      )}
    </svg>
  );
}

function BigButton({ icon, lines, className }: { icon: React.ReactNode; lines: [string, string]; className: string }) {
  return (
    <button type="button" className={clsx("flex flex-col items-center text-xs leading-[17px] whitespace-nowrap text-[#15428b]", className)}>
      <span className="flex h-8 items-center">{icon}</span>
      <span>{lines[0]}</span>
      <span className="flex h-[17px] items-center gap-1">
        {lines[1]}
        <Caret />
      </span>
    </button>
  );
}

function CellRow({ label, kind }: { label: string; kind: "insert" | "remove" | "format" }) {
  return (
    <button type="button" className="flex h-[22px] items-center gap-[3px] text-xs text-[#15428b]">
      <svg width="16" height="14" viewBox="0 0 16 14" fill="none" stroke="#445">
        {kind === "format" ? (
          <>
            <rect x="1.500" y="2.500" width="13" height="11" fill="#fff" />
            <path d="M1 6H15M1 10H15M6 2V14M11 2V14" stroke="#8ba" />
            <rect x="6" y="6" width="5" height="4" fill="#4a80e0" />
          </>
        ) : (
          <>
            <path d="M.500 .500H5.500V3.500H.500ZM.500 9.500H5.500V13H.500ZM.500 5H5.500V8H.500Z" fill="#fff" />
            <path d={kind === "insert" ? "M12 6.500H7M9 4.500L7 6.500L9 8.500M11 5H15V8H11Z" : "M7 6.500H10"} />
            {kind === "remove" && <path d="M8 1L15 9M15 1L8 9" stroke="#e03010" strokeWidth="2" />}
          </>
        )}
      </svg>
      {label}
      <span className="ml-1"><Caret /></span>
    </button>
  );
}

function EditGroup() {
  return (
    <RibbonGroup label="编辑" className="w-[124px]">
      <div className="flex pl-[6px] pt-[1px]">
        <div className="flex w-[26px] flex-col">
          <button type="button" aria-label="求和" className="flex h-[22px] items-center gap-2">
            <svg width="12" height="12" viewBox="0 0 12 12" fill="none"><path d="M10 3V1H2L6 6L2 11H10V9" stroke="#000" strokeWidth="1.500" /></svg>
            <Caret />
          </button>
          <button type="button" aria-label="填充" className="flex h-[22px] items-center gap-1">
            <svg width="14" height="15" viewBox="0 0 14 15"><rect x=".5" y=".5" width="13" height="14" fill="#e4eefb" stroke="#4a6fb0" /><path d="M1 1H13V4H1Z" fill="#4a80e0" /><path d="M5 5H9V9H12L7 14L2 9H5Z" fill="#2f6fe0" /></svg>
            <Caret />
          </button>
          <button type="button" aria-label="清除" className="flex h-[22px] items-center gap-1">
            <svg width="14" height="12" viewBox="0 0 14 12"><path d="M1 8L8 1H13L6 10H2Z" fill="#f4f4fa" stroke="#556" /><path d="M4 11.500H13" stroke="#333" /></svg>
            <Caret />
          </button>
        </div>
        <BigButton
          className="w-[46px]"
          lines={["排序和", "筛选"]}
          icon={
            <span className={clsx("flex items-center", SERIF)}>
              <span className="text-[15px] font-bold leading-[15px]">
                <span className="block text-[#2f5fa8]">A</span>
                <span className="block text-[#a02828]">Z</span>
              </span>
              <svg width="18" height="24" viewBox="0 0 18 24"><path d="M0 2H18L11 11V20L7 23V11Z" fill="#a4a8ac" stroke="#666" /></svg>
            </span>
          }
        />
        <BigButton
          className="w-[40px]"
          lines={["查找和", "选择"]}
          icon={
            <svg width="28" height="26" viewBox="0 0 28 26" fill="#5a7ab8" stroke="#2c4070">
              <path d="M5 6Q8 0 12 5V14L10 15V24H1V14ZM23 6Q20 0 16 5V14L18 15V24H27V14Z" />
              <path d="M12 7H16V12H12Z" fill="#8aa4d0" />
              <path d="M4 15V23M20 15V23M7 6V12M19 6V12" stroke="#d4e2f8" strokeWidth="2" />
            </svg>
          }
        />
      </div>
    </RibbonGroup>
  );
}

function Ribbon() {
  return (
    <div className="flex h-[105px] gap-[3px] rounded-r border border-l-0 border-[#8db2e3] bg-[#cfe0f5] pt-[1px]">
      <RibbonGroup label="" className="w-[38px] rounded-l-none border-l-0">
        <div className="flex justify-end pr-[6px] pt-[2px]">
          <svg width="34" height="66" viewBox="0 0 34 66" fill="none">
            <path d="M0 4H4V16H7V32H0" fill="#fff" stroke="#8a6a30" />
            <path d="M22 2L28 12M28 2L22 12" stroke="#6a7a90" strokeWidth="1.500" />
            <circle cx="22" cy="14" r="2.500" stroke="#3f6fd0" strokeWidth="1.500" />
            <circle cx="28" cy="14" r="2.500" stroke="#3f6fd0" strokeWidth="1.500" />
            <path d="M18 25H25L27 27V34H18ZM24 29H30L33 31V38H24Z" fill="#fff" stroke="#4a70b8" />
            <path d="M26 31H30M26 34H31" stroke="#4a70b8" />
            <path d="M33 46L28 53L25 51Z" fill="#8a7ac0" stroke="#544" />
            <path d="M19 52L25 50L29 54L27 61Z" fill="#e8cc50" stroke="#86702a" />
          </svg>
        </div>
        <span className="absolute bottom-0 left-0 text-xs leading-5 text-[#3e6aaa]">板</span>
        <svg width="9" height="9" viewBox="0 0 9 9" fill="none" stroke="#6f91bf" className="absolute bottom-2 right-1">
          <path d="M.500 6V.500H6M3 3L7 7M8 4V8H4" />
        </svg>
      </RibbonGroup>
      <FontGroup />
      <AlignGroup />
      <NumberGroup />
      <RibbonGroup label="样式" className="w-[165px]">
        <div className="flex pl-[2px] pt-[1px]">
          <BigButton className="w-[54px]" icon={<TableIcon kind="cond" />} lines={["条件格式", ""]} />
          <BigButton className="w-[62px]" icon={<TableIcon kind="table" />} lines={["套用", "表格格式"]} />
          <BigButton className="w-[44px]" icon={<TableIcon kind="cell" />} lines={["单元格", "样式"]} />
        </div>
      </RibbonGroup>
      <RibbonGroup label="单元格" className="w-[68px]">
        <div className="pl-[6px]">
          <CellRow kind="insert" label="插入" />
          <CellRow kind="remove" label="删除" />
          <CellRow kind="format" label="格式" />
        </div>
      </RibbonGroup>
      <EditGroup />
    </div>
  );
}

const COLUMNS = ["A", "B", "C", "D", "E", "F", "G", "H", "I", "J"];

const NOTES: [number, string, string][] = [
  [2, "距离外形边过近的过孔允许移动，无空间移动可删除", "h-[31px]"],
  [3, "外形由我司极限避铜制作，内层按普通军标标准避铜", "h-[28px]"],
  [4, "0.3mm的过孔按树脂塞孔制作，双面开窗的过孔也塞", "h-[30px]"],
  [5, "单面焊盘的非金属化孔，孔边不避铜，按露铜制作，接受孔边有毛刺", "h-[30px]"],
];

const CELL = "border-b border-r border-black p-0";
const EDGE = "border-b border-black p-0";
const NUM = "border-b border-r border-black p-0 text-center text-[17px] font-normal";

// Latin runs are set in a half-width face between the Chinese text
function Mixed({ text }: { text: string }) {
  return (
    <>
      {text.split(/([\x20-\x7e]+)/).map((part, i) =>
        i % 2 === 1 ? (
          <span key={i} className={clsx("text-[13px]", MONO)}>
            {part}
          </span>
        ) : (
          part
        )
      )}
    </>
  );
}

function Sheet() {
  return (
    <table className={clsx("w-[946px] table-fixed border-separate border-spacing-0 bg-white text-sm leading-4 font-bold text-black", SERIF)}>
      <colgroup>
        <col className="w-[108px]" />
        <col className="w-[44px]" />
        <col className="w-[111px]" />
        <col className="w-[61px]" />
        <col className="w-[81px]" />
        <col className="w-[72px]" />
        <col className="w-[49px]" />
        <col className="w-[89px]" />
        <col className="w-[232px]" />
        <col />
      </colgroup>
      <thead>
        <tr className="h-5">
          {COLUMNS.map((c, i) => (
            <th
              key={c}
              className={clsx(
                "border-b border-r p-0 text-[15px] leading-[18px] font-normal",
                i > 1 && i < 9
                  ? "border-[#d99a3a] bg-linear-to-b from-[#f8d38c] to-[#f0bd5c] text-[#3a4a3a]"
                  : "border-[#9eb6ce] bg-linear-to-b from-[#f2f5fa] to-[#d8e0ec] text-[#274030]",
                c === "J" && "pl-10"
              )}
            >
              {c}
            </th>
          ))}
        </tr>
      </thead>
      <tbody>
        <tr className="h-[30px]">
          <td rowSpan={3} className={clsx(CELL, "pt-[11px] align-top text-base leading-[18px] whitespace-nowrap")}>
            待确认光绘时
            <br />
            一起确认问题
          </td>
          <td className={NUM}>1</td>
          <td colSpan={6} className={CELL} />
          <td className={CELL} />
          <td className={EDGE} />
        </tr>
        {[2, 3].map((n) => (
          <tr key={n} className="h-[30px]">
            <td className={NUM}>{n}</td>
            <td colSpan={6} className={CELL} />
            <td className={CELL} />
            <td className={EDGE} />
          </tr>
        ))}
        <tr className="h-[59px]">
          <td className={clsx(CELL, "text-base leading-[18px]")}>
            重传文件
            <br />
            内容说明
          </td>
          <td colSpan={8} className={CELL} />
          <td className={EDGE} />
        </tr>
        <tr className="h-[41px]">
          <td rowSpan={5} className={clsx(CELL, "pt-5 align-top text-[15px] leading-5 whitespace-nowrap", CJK)}>
            顾客要求与文
            <br />
            件设计不一致
            <br />
            需要CAM更改
            <br />
            的信息指示<span className="font-normal text-[#1010d0]"> (这</span>
            <span className="block text-base font-normal leading-[19px] text-[#1010d0]">
              部分信息客诉
              <br />
              的风险最高)
            </span>
          </td>
          <td className={NUM}>1</td>
          <td colSpan={7} className={clsx(CELL, "pl-[3px] whitespace-nowrap outline-4 -outline-offset-2 outline-double outline-black")}>
            <Mixed text="外形整体公差按0/-0.2mm制作，内槽的公差按+/-0.1mm制作,外形上的几处凹槽，即gm2层重叠部分公差也按" />
            <br />
            <Mixed text="+/-0.1mm" />
          </td>
          <td className={EDGE} />
        </tr>
        {NOTES.map(([n, text, height]) => (
          <tr key={n} className={height}>
            <td className={NUM}>{n}</td>
            <td colSpan={7} className={clsx(CELL, "pl-[3px]")}>
              <Mixed text={text} />
            </td>
            <td className={EDGE} />
          </tr>
        ))}
        <tr className="h-[30px]">
          <td rowSpan={2} className={CELL} />
          <td className={NUM}>6</td>
          <td colSpan={7} className={clsx(CELL, "pl-[3px]")}>接受字符印在金面上</td>
          <td className={EDGE} />
        </tr>
        <tr className="h-[41px]">
          <td className={NUM} />
          <td colSpan={7} className={clsx(CELL, "pl-[3px] pt-[5px] align-top whitespace-nowrap")}>
            <Mixed text="底层按整板有镍镀软金，顶层gm3层标示的顶层线路区域开窗的焊盘或者线路图形有镍镀软金，间距不足的允许" />
          </td>
          <td className={EDGE} />
        </tr>
      </tbody>
    </table>
  );
}

function ExcelWindow() {
  return (
    <section
      className={clsx(
        "absolute bottom-0 left-0 top-[321px] flex w-[969px] flex-col overflow-hidden rounded-tr-md border-r border-t border-[#c9dde0] bg-linear-to-b from-[#55aab4] via-[#2a3a40] via-40% to-[#04080c] pr-[5px]",
        CJK
      )}
    >
      <div className="relative flex h-7 shrink-0 bg-linear-to-r from-[#7d98a6] via-[#55abb6] via-30% to-[#5ab0b8]">
        <div className="mt-1 flex h-[21px] w-10 items-center rounded-r-full border border-[#5a6a78] bg-[#8fa3b0] pl-[14px]">
          <svg width="15" height="15" viewBox="0 0 15 15">
            <path d="M0 0H15V15H2L0 13Z" fill="#3a3fb0" />
            <rect x="3" y="0" width="9" height="7" fill="#e8ecfa" />
            <rect x="4" y="9" width="8" height="6" fill="#c8cce4" />
            <rect x="5" y="10" width="2" height="4" fill="#222" />
          </svg>
        </div>
        <div className="ml-2 mt-3 flex flex-col gap-[2px]">
          <span className="h-px w-[5px] bg-[#1f3f80]" />
          <Caret />
        </div>
        <div className="flex-1 pr-[90px] pt-[3px] text-center text-[13px] leading-5 text-black">
          <span className="rounded-full bg-white/20 px-1 shadow-[0_0_8px_4px_rgba(255,255,255,0.2)]">
            8B074082A0-预审指示.xls&nbsp; [兼容模式] - Microsoft Excel
          </span>
        </div>
        <div className="absolute right-0 top-0 flex h-[19px] rounded-b border border-t-0 border-[#d0dcdc]">
          <button type="button" aria-label="最小化" className="flex w-[29px] items-end justify-center border-r border-[#d0dcdc] bg-[#6d8a90] pb-1">
            <span className="h-1 w-[12px] border border-[#555] bg-white" />
          </button>
          <button type="button" aria-label="还原" className="flex w-[27px] items-center justify-center border-r border-[#d0dcdc] bg-[#6d8084]">
            <span className="h-[9px] w-[11px] border-[3px] border-white" />
          </button>
          <button type="button" aria-label="关闭" className="flex w-[47px] items-center justify-center bg-linear-to-b from-[#e08a78] via-[#b82a10] to-[#d8664a]">
            <CloseGlyph />
          </button>
        </div>
      </div>
      <div className="flex min-h-0 flex-1 flex-col border-r border-t border-[#1c3a44] bg-[#bfdbff]">
        <div className="flex h-[27px] shrink-0 items-end gap-[5px] pl-[10px] text-xs text-[#15428b]">
          {["开始", "插入", "页面布局", "公式", "数据", "审阅", "视图"].map((tab, i) => (
            <button
              key={tab}
              type="button"
              className={clsx("h-[25px] rounded-t px-3 pb-[3px]", i === 0 && "border border-b-0 border-[#8db2e3] bg-linear-to-b from-[#f4f9ff] to-[#dfeaf8] px-[11px]")}
            >
              {tab}
            </button>
          ))}
          <div className="mb-2 ml-auto mr-[5px] flex items-center gap-3 text-[#55687c]">
            <span className="flex h-[13px] w-[13px] items-center justify-center rounded-full border border-[#2a4fa0] bg-[#3f78d8] text-[10px] font-bold leading-3 text-white">?</span>
            <span className="mt-2 h-[2px] w-[7px] bg-[#55687c]" />
            <svg width="9" height="7" viewBox="0 0 9 7" fill="none" stroke="currentColor"><path d="M2.500 2V.500H8.500V4.500H7M.500 2.500H6.500V6.500H.500Z" /></svg>
            <CloseGlyph className="h-[9px] w-[11px]" />
          </div>
        </div>
        <Ribbon />
        <div className="flex shrink-0 items-start py-[6px] pr-1">
          <div className="flex h-[33px] flex-1 items-center border border-l-0 border-[#9ebfe4] bg-linear-to-b from-[#f4f9ff] to-[#eaf4ff] pb-[2px] text-xs text-[#15428b]">
            <span className="-ml-[6px] w-[60px] font-bold whitespace-nowrap">安全警告</span>
            <span>宏已被禁用。</span>
            <button type="button" className="ml-[10px] h-[21px] w-[70px] border border-[#a5bddd] bg-white">选项...</button>
          </div>
          <button type="button" aria-label="关闭消息" className="ml-[6px] mt-1 text-[#6d7f92]">
            <CloseGlyph className="h-[9px]" />
          </button>
        </div>
        <div className="flex h-5 shrink-0 border-y border-[#5f86b8] bg-white text-black">
          <label className="flex w-[124px] items-center">
            <input aria-label="名称框" defaultValue="C8" className={clsx("w-[67px] text-center text-[15px] outline-none", SERIF)} />
            <svg width="7" height="4" viewBox="0 0 7 4" className="ml-auto mr-[6px]"><path d="M0 0H7L3.500 4Z" fill="#000" /></svg>
          </label>
          <div className="flex w-[77px] items-center justify-between rounded-l-full border-r border-[#7a9cc8] bg-linear-to-b from-[#e4eefa] to-[#a9c1e4] pl-1 pr-[6px]">
            <span className="h-2 w-2 rounded-full bg-white/80" />
            <i className={clsx("text-[15px] font-bold leading-4 text-[#444]", SERIF)}>fx</i>
          </div>
          <input
            aria-label="编辑栏"
            defaultValue="外形整体公差按0/-0.2mm制作，内槽的公差按+/-0.1mm制作,外形上的几处凹槽，即gm2层重叠部分公差也"
            className={clsx("min-w-0 flex-1 pl-[11px] text-[15px] leading-[18px] outline-none", SERIF)}
          />
          <div className="flex w-[15px] flex-col items-center justify-center gap-[2px] bg-[#a3bbdc]">
            <svg width="9" height="13" viewBox="0 0 9 13"><path d="M0 5L4.500 0L9 5ZM0 8H9L4.500 13Z" fill="#4a6a98" /></svg>
          </div>
          <button type="button" aria-label="展开编辑栏" className="flex w-[15px] items-center justify-center border-l border-[#7a9cc8] bg-[#dce8f6]">
            <svg width="8" height="8" viewBox="0 0 8 8" fill="none" stroke="#000" strokeWidth="1.500"><path d="M1 0L4 3L7 0M1 4L4 7L7 4" /></svg>
          </button>
        </div>
        <div className="mt-[2px] flex min-h-0 flex-1 overflow-hidden">
          <div className="min-w-0 flex-1 overflow-hidden">
            <Sheet />
          </div>
          <div className="flex w-4 shrink-0 flex-col items-center bg-linear-to-r from-[#9db8dc] to-[#6f92c4]">
            <span className="h-[6px] w-full border border-[#7a9cc8] bg-white" />
            <svg width="9" height="5" viewBox="0 0 9 5" className="mt-[10px]"><path d="M0 5L4.500 0L9 5Z" fill="#45546c" /></svg>
            <div className="mt-[21px] flex h-[161px] w-[14px] flex-col items-center justify-center gap-[2px] rounded-sm border border-[#5a7cb0] bg-linear-to-r from-[#f4f8fd] to-[#b4c8e4]">
              <span className="h-px w-2 bg-[#5a7090]" />
              <span className="h-px w-2 bg-[#5a7090]" />
              <span className="h-px w-2 bg-[#5a7090]" />
            </div>
          </div>
        </div>
      </div>
    </section>
  );
}

/* ---------- page ---------- */

const MARK = "pointer-events-none absolute border-2 border-[#d01414] shadow-[2px_2px_4px_rgba(0,0,0,0.5),inset_2px_2px_4px_rgba(0,0,0,0.35)]";

export default function App() {
  return (
    <div className="relative flex h-screen w-full flex-col overflow-hidden bg-black">
      <BoardDrawing />
      <MenuBar />
      <main className="relative flex min-h-0 flex-1 justify-between">
        <LayerSidebar />
        <RightStrip />
      </main>
      <PopviewOne />
      <PopviewTwo />
      <DrillToolManager />
      <ExcelWindow />
      <div className={clsx(MARK, "left-[140px] top-[214px] z-20 h-[51px] w-[726px]")} />
      <div className={clsx(MARK, "left-[351px] top-[705px] h-[47px] w-[523px]")} />
      <div className={clsx(MARK, "left-[116px] top-[732px] h-[33px] w-[149px]")} />
    </div>
  );
}
